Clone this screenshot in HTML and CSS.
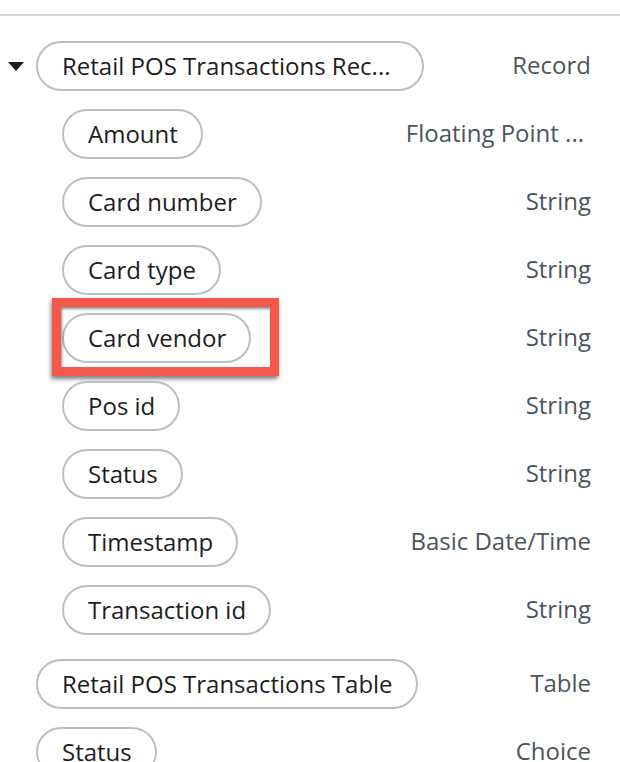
FILE: index.html
```html
<!DOCTYPE html>
<html>
<head>
<meta charset="utf-8">
<link rel="stylesheet" href="styles.css">
</head>
<body>
<div class="topbar"></div>
<ul class="tree">
  <li class="node">
    <div class="row">
      <span class="caret"></span>
      <span class="pill pill-wide">Retail POS Transactions Rec...</span>
      <span class="type">Record</span>
    </div>
    <ul class="children">
      <li class="row"><span class="pill">Amount</span><span class="type type-trunc">Floating Point ...</span></li>
      <li class="row"><span class="pill">Card number</span><span class="type">String</span></li>
      <li class="row"><span class="pill">Card type</span><span class="type">String</span></li>
      <li class="row"><span class="pill">Card vendor<span class="mark"></span></span><span class="type">String</span></li>
      <li class="row"><span class="pill">Pos id</span><span class="type">String</span></li>
      <li class="row"><span class="pill">Status</span><span class="type">String</span></li>
      <li class="row"><span class="pill">Timestamp</span><span class="type">Basic Date/Time</span></li>
      <li class="row"><span class="pill">Transaction id</span><span class="type">String</span></li>
    </ul>
  </li>
  <li class="node row top-row"><span class="pill">Retail POS Transactions Table</span><span class="type">Table</span></li>
  <li class="node row"><span class="pill">Status</span><span class="type">Choice</span></li>
</ul>
</body>
</html>
```

FILE: styles.css
```css
html, body {
  margin: 0;
  padding: 0;
  background: #ffffff;
  font-family: "Open Sans", "Noto Sans", sans-serif;
  overflow: hidden;
}

.topbar {
  height: 14px;
  border-bottom: 2px solid #d0d5d9;
}

.tree {
  list-style: none;
  margin: 0;
  padding: 25px 0 0 0;
  display: flex;
  flex-direction: column;
  gap: 18px;
}

.tree > .top-row {
  margin-top: 6px;
}

.tree > .node.row {
  padding-left: 36px;
}

.children {
  list-style: none;
  margin: 18px 0 0 0;
  padding: 0 0 0 62px;
  display: flex;
  flex-direction: column;
  gap: 18px;
}

.row {
  display: flex;
  align-items: center;
  padding-right: 29px;
  height: 50px;
}

.caret {
  width: 0;
  height: 0;
  margin-left: 8px;
  margin-right: 12px;
  border-left: 8px solid transparent;
  border-right: 8px solid transparent;
  border-top: 9px solid #1c1c1c;
}

.pill {
  position: relative;
  box-sizing: border-box;
  height: 50px;
  display: inline-flex;
  align-items: center;
  padding: 0 23px 2px 24px;
  border: 2px solid #b9c0c4;
  border-radius: 25px;
  font-size: 24px;
  color: #1e1e1e;
  white-space: nowrap;
}

.pill-wide {
  width: 388px;
}

.type {
  margin-left: auto;
  padding-bottom: 4px;
  font-size: 24px;
  color: #4b555a;
  white-space: nowrap;
}

.type-trunc {
  margin-right: 7px;
}

.mark {
  position: absolute;
  left: -12px;
  top: -17px;
  width: 227px;
  height: 78px;
  box-sizing: border-box;
  border: 9px solid #f4584a;
  box-shadow: -1px 3px 4px rgba(0, 0, 0, 0.5), inset 1px 2px 3px rgba(0, 0, 0, 0.45);
  pointer-events: none;
}
```
